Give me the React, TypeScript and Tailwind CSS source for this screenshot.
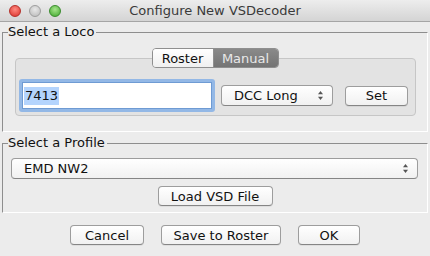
import React from "react";

const FONT = { fontFamily: '"DejaVu Sans", "Lucida Grande", sans-serif' };

function Arrows() {
  return (
    <svg width="7" height="11" viewBox="0 0 7 11" className="shrink-0">
      <path d="M3.5 1 L6 4.2 L1 4.2 Z" fill="#555" />
      <path d="M3.5 10 L6 6.8 L1 6.8 Z" fill="#555" />
    </svg>
  );
}

function Button({ label, w }: { label: string; w: string }) {
  return (
    <div
      className={`${w} h-[20px] flex items-center justify-center rounded-[4px] border border-[#9d9d9d] border-b-[#858585] bg-gradient-to-b from-[#ffffff] to-[#f1f1f1] text-[13px] leading-none text-[#111] shadow-[0_1px_0_rgba(0,0,0,0.06)]`}
    >
      {label}
    </div>
  );
}

function Combo({ label, w }: { label: string; w: string }) {
  return (
    <div
      className={`${w} h-[21px] flex items-center justify-between pl-[12px] pr-[8px] rounded-[4px] border border-[#9d9d9d] border-b-[#858585] bg-gradient-to-b from-[#ffffff] to-[#f1f1f1] text-[13px] leading-none text-[#111]`}
    >
      <span>{label}</span>
      <Arrows />
    </div>
  );
}

function Light({ from, to, border }: { from: string; to: string; border: string }) {
  return (
    <div
      className="w-[12px] h-[12px] rounded-full border"
      style={{ background: `radial-gradient(circle at 50% 35%, ${from}, ${to})`, borderColor: border }}
    />
  );
}

export default function App() {
  return (
    <div className="w-[430px] h-[256px] bg-[#ececec] flex flex-col overflow-hidden" style={FONT}>
      {/* title bar */}
      <div className="relative h-[22px] shrink-0 flex items-center justify-center bg-gradient-to-b from-[#ededed] to-[#d4d4d4] border-b border-[#a5a5a5]">
        <div className="absolute left-[9px] top-[5px] flex gap-[8px]">
          <Light from="#ff8a80" to="#d9302a" border="#b5302a" />
          <Light from="#e8e8e8" to="#b8b8b8" border="#9e9e9e" />
          <Light from="#a6e58b" to="#3fa62c" border="#3a8c2d" />
        </div>
        <span className="text-[13px] leading-none text-[#3a3a3a]">Configure New VSDecoder</span>
      </div>

      {/* Select a Loco */}
      <fieldset className="mx-[2px] mt-[2px] border-t border-l border-t-[#8e8e8e] border-l-[#8e8e8e] border-r border-b border-r-white border-b-white pb-[15px]">
        <legend className="ml-[5px] pr-[2px] text-[13px] leading-[16px] text-[#111]">Select a Loco</legend>
        <div className="flex flex-col items-center mt-[8px]">
          <div className="relative z-10 flex h-[20px] rounded-[4px] border border-[#8f8f8f] overflow-hidden text-[13px] leading-none">
            <div className="w-[61px] flex items-center justify-center bg-gradient-to-b from-white to-[#f0f0f0] text-[#111] border-r border-[#8f8f8f]">
              Roster
            </div>
            <div className="w-[64px] flex items-center justify-center bg-gradient-to-b from-[#8a8a8a] to-[#747474] text-[#e8e8e8]">
              Manual
            </div>
          </div>
          <div className="-mt-[10px] ml-[12px] mr-[11px] self-stretch rounded-[4px] border border-[#c6c6c6] bg-[#e3e3e3] pt-[20px] pb-[3px] pl-[3px] pr-[7px] flex items-center">
            <div className="w-[196px] h-[33px] rounded-[3px] border-[3px] border-[#93b8e6] bg-white flex items-center pl-[2px] shadow-[inset_0_0_0_1px_#6f9bd3]">
              <span className="bg-[#b4d4fd] text-[13px] leading-[18px] text-[#111] px-[1px]">7413</span>
            </div>
            <Combo label="DCC Long" w="w-[112px] ml-[6px]" />
            <Button label="Set" w="w-[63px] ml-[12px]" />
          </div>
        </div>
      </fieldset>

      {/* Select a Profile */}
      <fieldset className="mx-[2px] mt-[3px] border-t border-l border-t-[#8e8e8e] border-l-[#8e8e8e] border-r border-b border-r-white border-b-white pb-[6px]">
        <legend className="ml-[5px] pr-[2px] text-[13px] leading-[16px] text-[#111]">Select a Profile</legend>
        <div className="flex flex-col items-center">
          <Combo label="EMD NW2" w="self-stretch ml-[8px] mr-[9px] mt-[7px]" />
          <Button label="Load VSD File" w="w-[115px] mt-[7px]" />
        </div>
      </fieldset>

      {/* bottom buttons */}
      <div className="flex justify-center gap-[17px] mt-[12px]">
        <Button label="Cancel" w="w-[74px]" />
        <Button label="Save to Roster" w="w-[120px]" />
        <Button label="OK" w="w-[62px]" />
      </div>
    </div>
  );
}
